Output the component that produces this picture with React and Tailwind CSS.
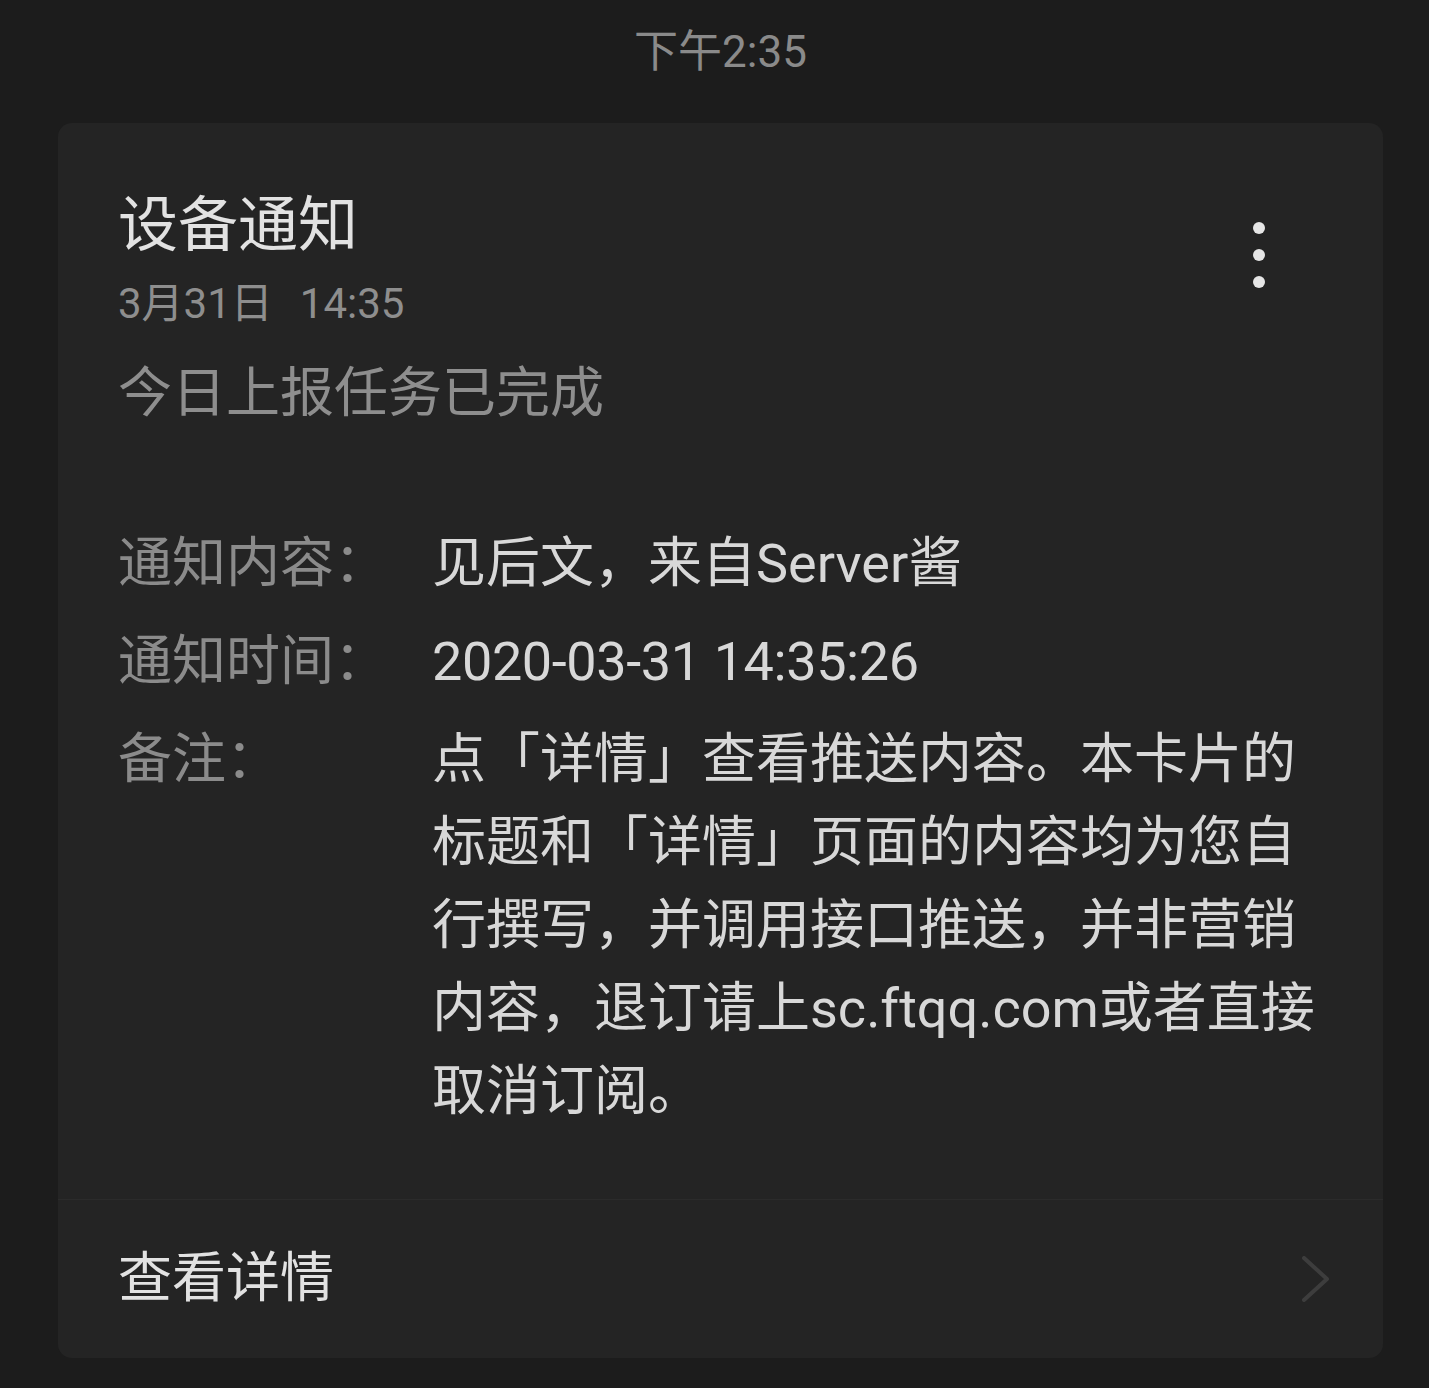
const FONT = "font-['Roboto','Noto_Sans_CJK_SC',sans-serif]";

function Row({ label, children }) {
  return (
    <div className="flex">
      <div className="w-[314px] shrink-0 text-[54px] leading-[83px] text-[#8b8b8b]">{label}</div>
      <div className="w-[895px] text-[54px] leading-[83px] text-[#d8d8d8]">{children}</div>
    </div>
  );
}

export default function App() {
  return (
    <div className={`min-h-[1388px] w-[1429px] bg-[#1c1c1c] ${FONT}`}>
      {/* status bar */}
      <div className="flex h-[123px] justify-center pl-[12px] pt-[26px]">
        <span className="text-[44px] leading-[52px] text-[#8a8a8a]">下午2:35</span>
      </div>

      {/* notification card */}
      <div className="ml-[58px] w-[1325px] overflow-hidden rounded-[14px] bg-[#242424]">
        <div className="relative px-[60px] pt-[67px] pb-[66px]">
          <div className="text-[60px] leading-[72px] text-[#e2e2e2]">设备通知</div>
          <div className="mt-[17px] flex gap-[27px] text-[42px] leading-[49px] text-[#8e8e8e]">
            <span>3月31日</span>
            <span>14:35</span>
          </div>
          <div className="mt-[33px] text-[54px] leading-[66px] text-[#8e8e8e]">今日上报任务已完成</div>

          <div className="mt-[95px] flex flex-col gap-[15px]">
            <Row label="通知内容：">见后文，来自Server酱</Row>
            <Row label="通知时间：">
              <span className="tracking-[-0.4px]">2020-03-31 14:35:26</span>
            </Row>
            <Row label="备注：">
              点「详情」查看推送内容。本卡片的标题和「详情」页面的内容均为您自行撰写，并调用接口推送，并非营销内容，退订请上sc.ftqq.com或者直接取消订阅。
            </Row>
          </div>

          <div className="absolute right-[118px] top-[99px] flex flex-col gap-[15px]">
            <span className="h-[12px] w-[12px] rounded-full bg-[#e6e6e6]" />
            <span className="h-[12px] w-[12px] rounded-full bg-[#e6e6e6]" />
            <span className="h-[12px] w-[12px] rounded-full bg-[#e6e6e6]" />
          </div>
        </div>

        <div className="h-px bg-[#2b2b2b]" />

        <div className="flex h-[158px] items-center justify-between pl-[60px] pr-[54px]">
          <span className="text-[54px] leading-[66px] text-[#e2e2e2]">查看详情</span>
          <svg width="27" height="46" viewBox="0 0 27 46" fill="none">
            <path d="M2 2 L25 23 L2 44" stroke="#3d3d3d" strokeWidth="4" strokeLinecap="round" strokeLinejoin="round" />
          </svg>
        </div>
      </div>
    </div>
  );
}
